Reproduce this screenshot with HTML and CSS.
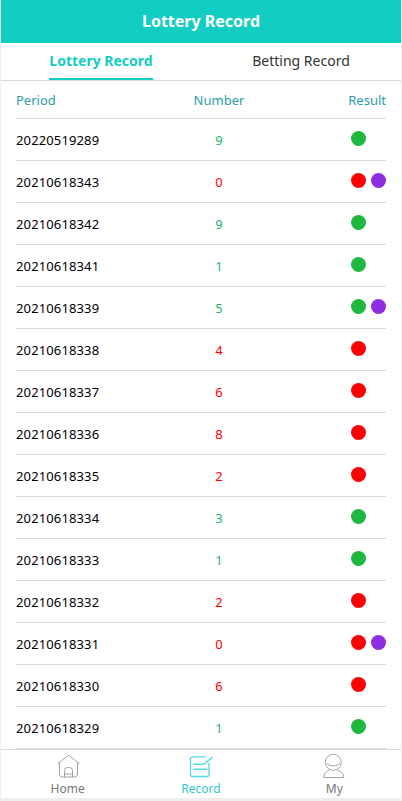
FILE: index.html
```html
<!DOCTYPE html>
<html lang="en">
<head>
    <meta charset="UTF-8">
    <meta name="viewport" content="width=device-width, initial-scale=1.0">
    <title>Lottery Record</title>
    <link rel="stylesheet" href="styles.css">
</head>
<body>
    <div class="app">
        <header class="top-bar">Lottery Record</header>

        <nav class="tabs">
            <div class="tab active"><span>Lottery Record</span></div>
            <div class="tab"><span>Betting Record</span></div>
        </nav>

        <div class="record-list">
            <div class="row head">
                <div class="period">Period</div>
                <div class="number">Number</div>
                <div class="result">Result</div>
            </div>
            <div class="row">
                <div class="period">20220519289</div>
                <div class="number green">9</div>
                <div class="result"><i class="dot bg-green"></i></div>
            </div>
            <div class="row">
                <div class="period">20210618343</div>
                <div class="number red">0</div>
                <div class="result"><i class="dot bg-red"></i><i class="dot bg-purple"></i></div>
            </div>
            <div class="row">
                <div class="period">20210618342</div>
                <div class="number green">9</div>
                <div class="result"><i class="dot bg-green"></i></div>
            </div>
            <div class="row">
                <div class="period">20210618341</div>
                <div class="number green">1</div>
                <div class="result"><i class="dot bg-green"></i></div>
            </div>
            <div class="row">
                <div class="period">20210618339</div>
                <div class="number green">5</div>
                <div class="result"><i class="dot bg-green"></i><i class="dot bg-purple"></i></div>
            </div>
            <div class="row">
                <div class="period">20210618338</div>
                <div class="number red">4</div>
                <div class="result"><i class="dot bg-red"></i></div>
            </div>
            <div class="row">
                <div class="period">20210618337</div>
                <div class="number red">6</div>
                <div class="result"><i class="dot bg-red"></i></div>
            </div>
            <div class="row">
                <div class="period">20210618336</div>
                <div class="number red">8</div>
                <div class="result"><i class="dot bg-red"></i></div>
            </div>
            <div class="row">
                <div class="period">20210618335</div>
                <div class="number red">2</div>
                <div class="result"><i class="dot bg-red"></i></div>
            </div>
            <div class="row">
                <div class="period">20210618334</div>
                <div class="number green">3</div>
                <div class="result"><i class="dot bg-green"></i></div>
            </div>
            <div class="row">
                <div class="period">20210618333</div>
                <div class="number green">1</div>
                <div class="result"><i class="dot bg-green"></i></div>
            </div>
            <div class="row">
                <div class="period">20210618332</div>
                <div class="number red">2</div>
                <div class="result"><i class="dot bg-red"></i></div>
            </div>
            <div class="row">
                <div class="period">20210618331</div>
                <div class="number red">0</div>
                <div class="result"><i class="dot bg-red"></i><i class="dot bg-purple"></i></div>
            </div>
            <div class="row">
                <div class="period">20210618330</div>
                <div class="number red">6</div>
                <div class="result"><i class="dot bg-red"></i></div>
            </div>
            <div class="row">
                <div class="period">20210618329</div>
                <div class="number green">1</div>
                <div class="result"><i class="dot bg-green"></i></div>
            </div>
        </div>

        <footer class="tab-bar">
            <div class="tab-item">
                <svg width="24" height="24" viewBox="0 0 24 24" fill="none" stroke="#a3a3a3" stroke-width="1" stroke-linecap="round" stroke-linejoin="round">
                    <path d="M2 8.500 11.300 1a2 2 0 0 1 2.400 0L23 8.500"/>
                    <path d="M3.500 7.500v11.500a3 3 0 0 0 3 3h12a3 3 0 0 0 3-3V7.500"/>
                    <path d="M8.500 22v-6.500a3 3 0 0 1 3-3h2a3 3 0 0 1 3 3V22"/>
                    <path d="M8.500 19h8"/>
                </svg>
                <span>Home</span>
            </div>
            <div class="tab-item active">
                <svg width="24" height="24" viewBox="0 0 24 24" fill="none" stroke="#52d9e3" stroke-width="1.300" stroke-linecap="round">
                    <path d="M16 1.800H3.500a2 2 0 0 0-2 2V19.500a2 2 0 0 0 2 2H18a2 2 0 0 0 2-2V8"/>
                    <path d="M15 9 23 2.500" stroke-width="1.500"/>
                    <path d="M5 9.300h9M5 14.300h13" stroke-width="1.500"/>
                </svg>
                <span>Record</span>
            </div>
            <div class="tab-item">
                <svg width="24" height="26" viewBox="0 0 24 26" fill="none" stroke="#a3a3a3" stroke-width="1" stroke-linejoin="round">
                    <circle cx="11.300" cy="8.300" r="8"/>
                    <path d="M5 9.500c3 3 10 3 13 0"/>
                    <path d="M7.500 16C4 17.500 1.700 20 1.700 23.500h20C21.700 20 19.500 17.500 15.500 16"/>
                </svg>
                <span>My</span>
            </div>
        </footer>
    </div>
</body>
</html>
```

FILE: styles.css
```css
* {
    box-sizing: border-box;
}

html, body {
    height: 100%;
}

body {
    margin: 0;
    background-color: #eeeeee;
    font-family: 'Noto Sans', 'Noto Sans CJK SC', sans-serif;
    overflow: hidden;
}

.app {
    display: flex;
    flex-direction: column;
    height: 798px;
    margin: 0 1px;
    background-color: #fff;
}

.top-bar {
    height: 43px;
    line-height: 42px;
    flex-shrink: 0;
    background-color: #12cdc1;
    color: #fff;
    font-size: 16px;
    font-weight: 700;
    text-align: center;
}

.tabs {
    display: flex;
    height: 38px;
    flex-shrink: 0;
    border-bottom: 1px solid #d9d9d9;
}

.tab {
    flex: 1;
    text-align: center;
    font-size: 14px;
    color: #333;
}

.tab span {
    display: inline-block;
    height: 37px;
    line-height: 36px;
}

.tab.active {
    color: #12cdc1;
    font-weight: 700;
}

.tab.active span {
    border-bottom: 2px solid #12cdc1;
}

.record-list {
    flex: 1;
    min-height: 0;
    overflow: hidden;
    padding: 0 15px;
}

.row {
    display: grid;
    grid-template-columns: 163px 80px 1fr;
    align-items: center;
    height: 42px;
    border-bottom: 1px solid #d9d9d9;
    font-size: 13px;
    color: #000;
}

.row:not(.head) .period {
    letter-spacing: 0.13px;
}

.row.head {
    height: 38px;
    color: #2b9ea6;
}

.number {
    text-align: center;
}

.result {
    display: flex;
    justify-content: flex-end;
    gap: 5px;
}

.row:not(.head) .result {
    padding-right: 20px;
    margin-top: -3px;
}

.row:not(.head) .result:has(.dot + .dot) {
    padding-right: 0;
}

.dot {
    display: block;
    width: 15px;
    height: 15px;
    border-radius: 50%;
}

.green {
    color: #1bb870;
}

.red {
    color: #ff0000;
}

.bg-green {
    background-color: #1fb83f;
}

.bg-red {
    background-color: #ff0000;
}

.bg-purple {
    background-color: #8e2de2;
}

.tab-bar {
    display: flex;
    height: 49px;
    flex-shrink: 0;
    border-top: 1px solid #d9d9d9;
    background-color: #fff;
}

.tab-item {
    flex: 1;
    display: flex;
    flex-direction: column;
    align-items: center;
    padding-top: 5px;
    font-size: 12px;
    color: #777;
}

.tab-item span {
    line-height: 17px;
    margin-top: 1px;
}

.tab-item:last-child {
    padding-top: 4px;
}

.tab-item:last-child span {
    margin-top: 0;
}

.tab-item.active {
    color: #2fc9cf;
}
```
